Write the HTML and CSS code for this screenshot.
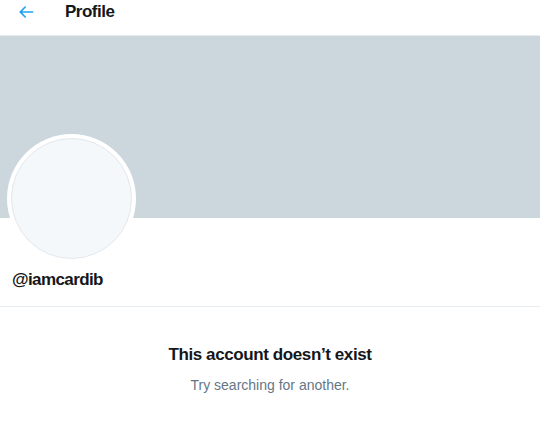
FILE: index.html
```html
<!DOCTYPE html>
<html lang="en">

<head>
    <meta charset="UTF-8" />
    <meta name="viewport" content="width=device-width, initial-scale=1.0" />
    <title>Profile</title>
    <link rel="stylesheet" href="styles.css">
</head>

<body>

    <header class="topbar">
        <a class="back" href="#" aria-label="Back">
            <svg viewBox="0 0 24 24" width="20" height="20">
                <path d="M20 11H7.414l4.293-4.293a1 1 0 0 0-1.414-1.414l-6 6a1 1 0 0 0 0 1.414l6 6a1 1 0 0 0 1.414-1.414L7.414 13H20a1 1 0 0 0 0-2z" />
            </svg>
        </a>
        <h1 class="title">Profile</h1>
    </header>

    <div class="banner"></div>

    <section class="profile">
        <div class="avatar">
            <div class="avatar-inner"></div>
        </div>
        <div class="handle">@iamcardib</div>
    </section>

    <section class="empty">
        <h2>This account doesn&rsquo;t exist</h2>
        <p>Try searching for another.</p>
    </section>

</body>

</html>
```

FILE: styles.css
```css
body {
    margin: 0;
    background: #fff;
    font-family: "Liberation Sans", Arial, sans-serif;
    color: #14171a;
}

.topbar {
    height: 36px;
    display: flex;
    align-items: center;
    padding-left: 16px;
    border-bottom: 1px solid #e6ecf0;
    box-sizing: border-box;
}

.back {
    display: flex;
    fill: #1da1f2;
    margin-top: -12px;
}

.title {
    margin: -11px 0 0 29px;
    font-size: 17px;
    font-weight: bold;
    letter-spacing: -0.5px;
}

.banner {
    height: 182px;
    background: #ccd6dd;
}

/* flex so the avatar's negative margin doesn't collapse outward */
.profile {
    display: flex;
    flex-direction: column;
    align-items: flex-start;
    padding: 0 12px;
    height: 88px;
    border-bottom: 1px solid #e6ecf0;
}

.avatar {
    width: 129px;
    height: 129px;
    margin: -84px 0 0 -5px;
    border-radius: 50%;
    background: #fff;
    padding: 4px;
    box-sizing: border-box;
}

.avatar-inner {
    width: 100%;
    height: 100%;
    border-radius: 50%;
    background: #f5f8fa;
    border: 1px solid #e1e8ed;
    box-sizing: border-box;
}

.handle {
    margin-top: 7px;
    font-size: 17px;
    font-weight: bold;
    letter-spacing: -0.6px;
}

.empty {
    text-align: center;
    padding-top: 38px;
}

.empty h2 {
    margin: 0;
    font-size: 17px;
    font-weight: bold;
    letter-spacing: -0.4px;
}

.empty p {
    margin: 12px 0 0;
    font-size: 14px;
    color: #657786;
}
```
